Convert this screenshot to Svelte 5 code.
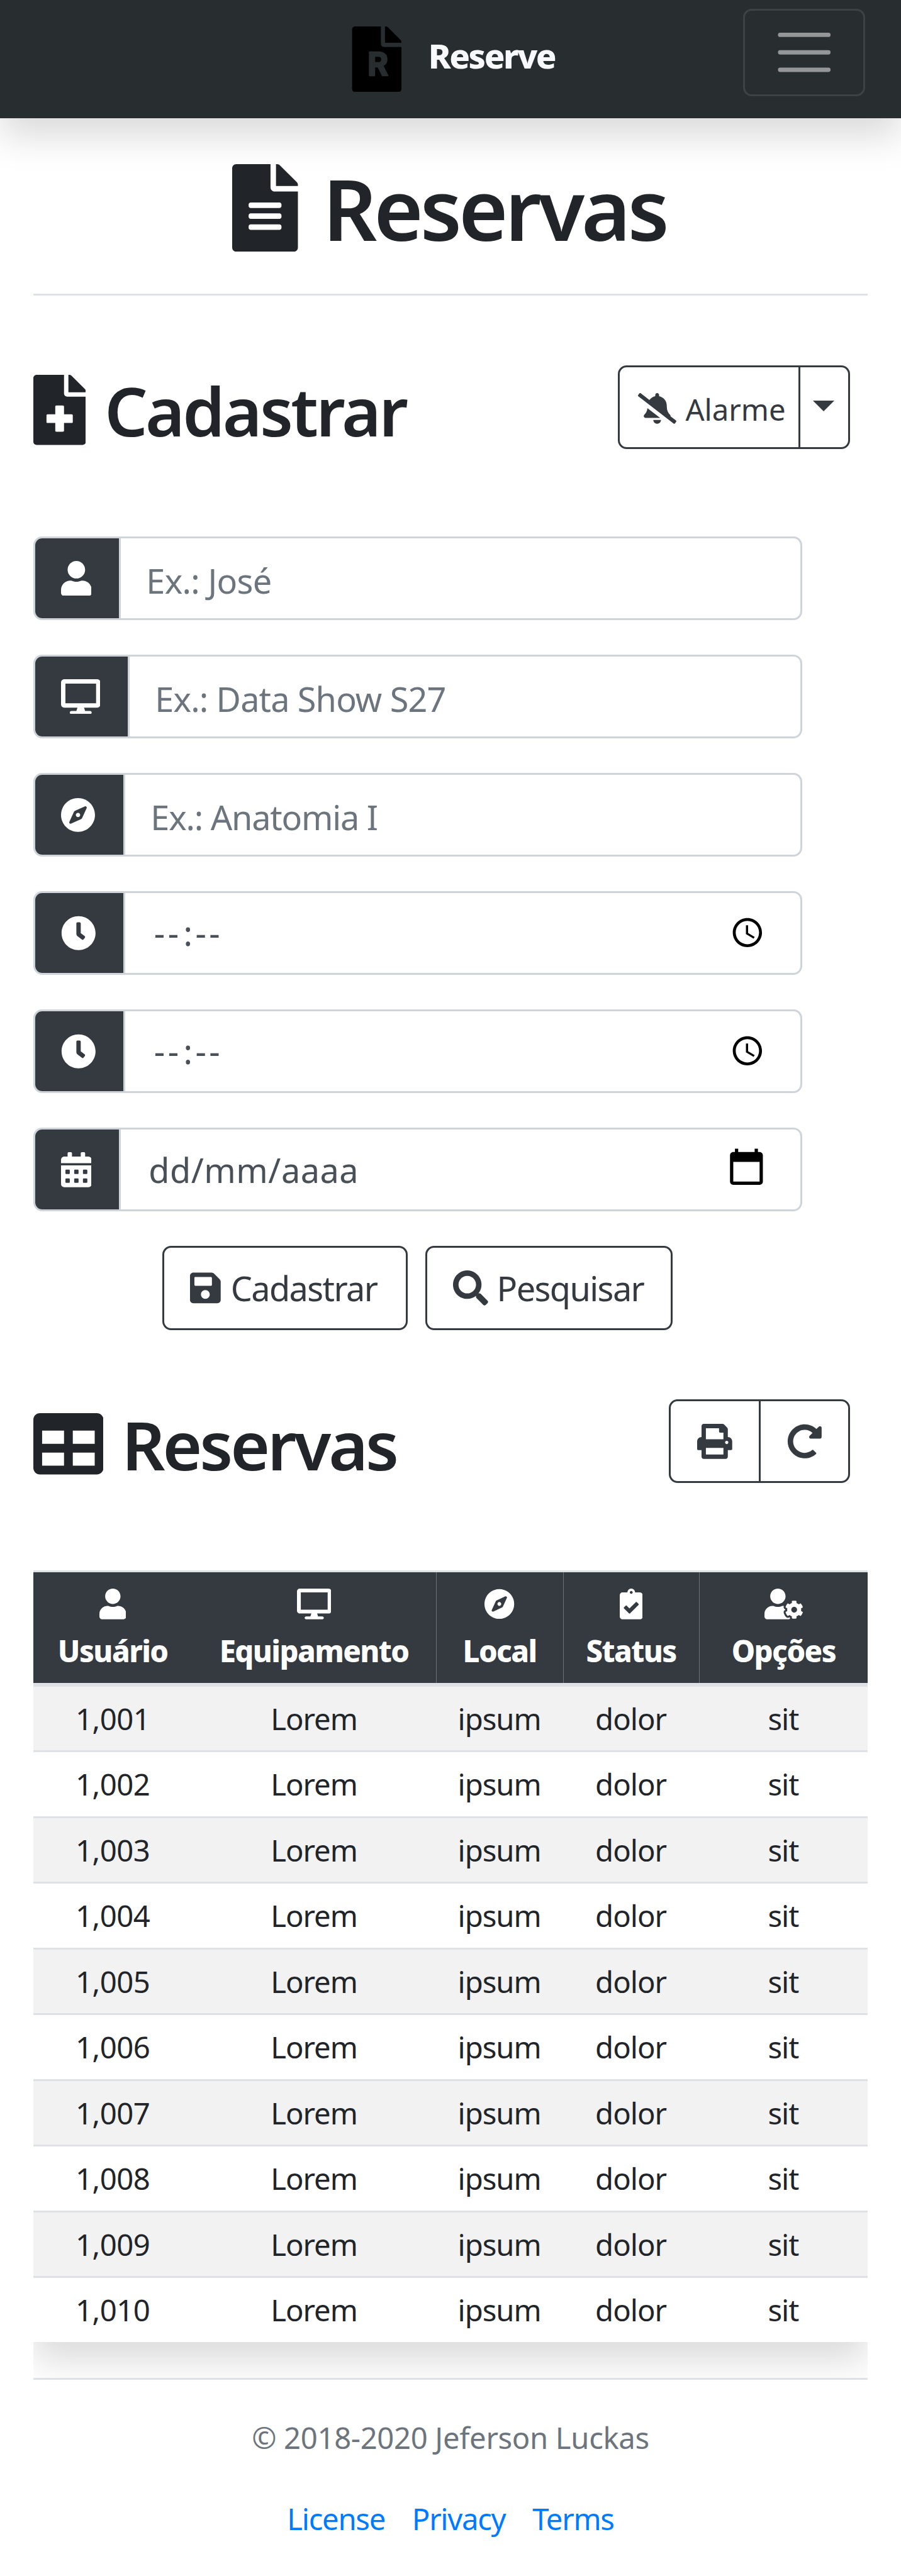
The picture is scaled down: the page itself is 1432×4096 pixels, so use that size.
<script>
  const icons = {
    fileAlt: [384, 'M224 136V0H24C10.7 0 0 10.7 0 24v464c0 13.3 10.7 24 24 24h336c13.3 0 24-10.7 24-24V160H248c-13.2 0-24-10.8-24-24zm64 236c0 6.6-5.4 12-12 12H108c-6.6 0-12-5.4-12-12v-8c0-6.6 5.4-12 12-12h168c6.6 0 12 5.4 12 12v8zm0-64c0 6.6-5.4 12-12 12H108c-6.6 0-12-5.4-12-12v-8c0-6.6 5.4-12 12-12h168c6.6 0 12 5.4 12 12v8zm0-72v8c0 6.6-5.4 12-12 12H108c-6.6 0-12-5.4-12-12v-8c0-6.6 5.4-12 12-12h168c6.6 0 12 5.4 12 12zm96-114.1v6.1H256V0h6.1c6.4 0 12.5 2.5 17 7l97.9 98c4.5 4.5 7 10.6 7 16.9z'],
    filePlus: [384, 'M377 105L279.1 7c-4.5-4.5-10.6-7-17-7H256v128h128v-6.1c0-6.3-2.5-12.4-7-16.9zM224 136V0H24C10.7 0 0 10.7 0 24v464c0 13.3 10.7 24 24 24h336c13.3 0 24-10.7 24-24V160H248c-13.2 0-24-10.8-24-24zm64 160v48c0 4.4-3.6 8-8 8h-56v56c0 4.4-3.6 8-8 8h-48c-4.4 0-8-3.6-8-8v-56h-56c-4.4 0-8-3.6-8-8v-48c0-4.4 3.6-8 8-8h56v-56c0-4.4 3.6-8 8-8h48c4.4 0 8 3.6 8 8v56h56c4.4 0 8 3.6 8 8z'],
    file: [384, 'M377 105L279.1 7c-4.5-4.5-10.6-7-17-7H256v128h128v-6.1c0-6.3-2.5-12.4-7-16.9zM224 136V0H24C10.7 0 0 10.7 0 24v464c0 13.3 10.7 24 24 24h336c13.3 0 24-10.7 24-24V160H248c-13.2 0-24-10.8-24-24z'],
    user: [448, 'M224 256c70.7 0 128-57.3 128-128S294.7 0 224 0 96 57.3 96 128s57.3 128 128 128zm89.6 32h-16.7c-22.2 10.2-46.9 16-72.9 16s-50.6-5.8-72.9-16h-16.7C60.2 288 0 348.2 0 422.4V464c0 26.5 21.5 48 48 48h352c26.5 0 48-21.5 48-48v-41.6c0-74.2-60.2-134.4-134.4-134.4z'],
    desktop: [576, 'M528 0H48C21.5 0 0 21.5 0 48v320c0 26.5 21.5 48 48 48h192l-16 48h-72c-13.3 0-24 10.7-24 24s10.7 24 24 24h272c13.3 0 24-10.7 24-24s-10.7-24-24-24h-72l-16-48h192c26.5 0 48-21.5 48-48V48c0-26.5-21.5-48-48-48zm-16 352H64V64h448v288z'],
    compass: [496, 'M225.38 233.37c-12.5 12.5-12.5 32.76 0 45.25 12.49 12.5 32.76 12.5 45.25 0 12.5-12.5 12.5-32.76 0-45.25-12.5-12.49-32.76-12.49-45.25 0zM248 8C111.03 8 0 119.03 0 256s111.03 248 248 248 248-111.03 248-248S384.97 8 248 8zm126.14 148.05L308.17 300.4a31.938 31.938 0 0 1-15.77 15.77l-144.34 65.97c-16.65 7.61-33.81-9.55-26.2-26.2l65.98-144.35a31.938 31.938 0 0 1 15.77-15.77l144.34-65.97c16.65-7.6 33.8 9.55 26.19 26.2z'],
    clock: [512, 'M256,8C119,8,8,119,8,256S119,504,256,504,504,393,504,256,393,8,256,8Zm92.49,313h0l-20,25a16,16,0,0,1-22.49,2.5h0l-67-49.72a40,40,0,0,1-15-31.23V112a16,16,0,0,1,16-16h32a16,16,0,0,1,16,16V256l58,42.5A16,16,0,0,1,348.49,321Z'],
    calendar: [448, 'M0 464c0 26.5 21.5 48 48 48h352c26.5 0 48-21.5 48-48V192H0v272zm320-196c0-6.6 5.4-12 12-12h40c6.6 0 12 5.4 12 12v40c0 6.6-5.4 12-12 12h-40c-6.6 0-12-5.4-12-12v-40zm0 128c0-6.6 5.4-12 12-12h40c6.6 0 12 5.4 12 12v40c0 6.6-5.4 12-12 12h-40c-6.6 0-12-5.4-12-12v-40zM192 268c0-6.6 5.4-12 12-12h40c6.6 0 12 5.4 12 12v40c0 6.6-5.4 12-12 12h-40c-6.6 0-12-5.4-12-12v-40zm0 128c0-6.6 5.4-12 12-12h40c6.6 0 12 5.4 12 12v40c0 6.6-5.4 12-12 12h-40c-6.6 0-12-5.4-12-12v-40zM64 268c0-6.6 5.4-12 12-12h40c6.6 0 12 5.4 12 12v40c0 6.6-5.4 12-12 12H76c-6.6 0-12-5.4-12-12v-40zm0 128c0-6.6 5.4-12 12-12h40c6.6 0 12 5.4 12 12v40c0 6.6-5.4 12-12 12H76c-6.6 0-12-5.4-12-12v-40zM400 64h-48V16c0-8.8-7.2-16-16-16h-32c-8.8 0-16 7.2-16 16v48H160V16c0-8.8-7.2-16-16-16h-32c-8.8 0-16 7.2-16 16v48H48C21.5 64 0 85.5 0 112v48h448v-48c0-26.5-21.5-48-48-48z'],
    save: [448, 'M433.941 129.941l-83.882-83.882A48 48 0 0 0 316.118 32H48C21.49 32 0 53.49 0 80v352c0 26.51 21.49 48 48 48h352c26.51 0 48-21.49 48-48V163.882a48 48 0 0 0-14.059-33.941zM224 416c-35.346 0-64-28.654-64-64 0-35.346 28.654-64 64-64s64 28.654 64 64c0 35.346-28.654 64-64 64zm96-304.52V212c0 6.627-5.373 12-12 12H76c-6.627 0-12-5.373-12-12V108c0-6.627 5.373-12 12-12h228.52c3.183 0 6.235 1.264 8.485 3.515l3.48 3.48A11.996 11.996 0 0 1 320 111.48z'],
    search: [512, 'M505 442.7L405.3 343c-4.5-4.5-10.6-7-17-7H372c27.6-35.3 44-79.7 44-128C416 93.1 322.9 0 208 0S0 93.1 0 208s93.1 208 208 208c48.3 0 92.7-16.4 128-44v16.3c0 6.4 2.5 12.5 7 17l99.7 99.7c9.4 9.4 24.6 9.4 33.9 0l28.3-28.3c9.4-9.4 9.4-24.6.1-34zM208 336c-70.7 0-128-57.2-128-128 0-70.7 57.2-128 128-128 70.7 0 128 57.2 128 128 0 70.7-57.2 128-128 128z'],
    table: [512, 'M464 32H48C21.49 32 0 53.49 0 80v352c0 26.51 21.49 48 48 48h416c26.51 0 48-21.49 48-48V80c0-26.51-21.49-48-48-48zM224 416H64v-96h160v96zm0-160H64v-96h160v96zm224 160H288v-96h160v96zm0-160H288v-96h160v96z'],
    print: [512, 'M448 192V77.25c0-8.49-3.37-16.62-9.37-22.63L393.37 9.37c-6-6-14.14-9.37-22.63-9.37H96C78.33 0 64 14.33 64 32v160c-35.35 0-64 28.65-64 64v112c0 8.84 7.16 16 16 16h48v96c0 17.67 14.33 32 32 32h320c17.67 0 32-14.33 32-32v-96h48c8.84 0 16-7.16 16-16V256c0-35.35-28.65-64-64-64zm-64 256H128v-96h256v96zm0-224H128V64h192v48c0 8.84 7.16 16 16 16h48v96zm48 72c-13.25 0-24-10.75-24-24 0-13.26 10.75-24 24-24s24 10.74 24 24c0 13.25-10.75 24-24 24z'],
    redo: [512, 'M256.455 8c66.269.119 126.437 26.233 170.859 68.685l35.715-35.715C478.149 25.851 504 36.559 504 57.941V192c0 13.255-10.745 24-24 24H345.941c-21.382 0-32.09-25.851-16.971-40.971l41.75-41.75c-30.864-28.899-70.801-44.907-113.23-45.273-92.398-.798-170.283 73.977-169.484 169.442C88.764 348.009 162.184 424 256 424c41.127 0 79.997-14.678 110.629-41.556 4.743-4.161 11.906-3.908 16.368.553l39.662 39.662c4.872 4.872 4.631 12.815-.482 17.433C378.202 479.813 319.926 504 256 504 119.034 504 8.001 392.967 8 256.002 7.995 119.193 119.646 7.755 256.455 8z'],
    bellSlash: [640, 'M633.82 458.1l-90.62-70.05c.19-1.38.8-2.66.8-4.06.05-7.55-2.61-15.27-8.61-21.71-19.32-20.76-55.47-51.99-55.47-154.29 0-77.7-54.48-139.9-127.94-155.16V32c0-17.67-14.32-32-31.98-32s-31.98 14.33-31.98 32v20.84c-40.33 8.38-74.66 31.07-97.59 62.57L45.47 3.37C38.49-2.05 28.43-.8 23.01 6.18L3.37 31.45C-2.05 38.42-.8 48.47 6.18 53.9l588.35 454.73c6.98 5.43 17.03 4.17 22.46-2.81l19.64-25.27c5.42-6.97 4.17-17.02-2.81-22.45zM157.23 251.54c-8.61 67.96-36.41 93.33-52.62 110.75-6 6.45-8.66 14.16-8.61 21.71.11 16.4 12.98 32 32.1 32h241.92L157.23 251.54zM320 512c35.32 0 63.97-28.65 63.97-64H256.03c0 35.35 28.65 64 63.97 64z'],
    clipboard: [384, 'M336 64h-80c0-35.3-28.7-64-64-64s-64 28.7-64 64H48C21.5 64 0 85.5 0 112v352c0 26.5 21.5 48 48 48h288c26.5 0 48-21.5 48-48V112c0-26.5-21.5-48-48-48zM192 40c13.3 0 24 10.7 24 24s-10.7 24-24 24-24-10.7-24-24 10.7-24 24-24zm121.2 231.8l-143 141.8c-4.7 4.7-12.3 4.6-17-.1l-82.6-83.3c-4.7-4.7-4.6-12.3.1-17L99.1 285c4.7-4.7 12.3-4.6 17 .1l46 46.4 106-105.2c4.7-4.7 12.3-4.6 17 .1l28.2 28.4c4.7 4.8 4.6 12.3-.1 17z'],
    userCog: [640, 'M610.5 373.3c2.6-14.1 2.6-28.5 0-42.6l25.8-14.9c3-1.7 4.3-5.2 3.3-8.5-6.7-21.6-18.2-41.2-33.2-57.4-2.3-2.5-6-3.1-9-1.4l-25.8 14.9c-10.9-9.3-23.4-16.5-36.9-21.3v-29.8c0-3.4-2.4-6.4-5.7-7.1-22.3-5-45-4.8-66.2 0-3.3.7-5.7 3.7-5.7 7.1v29.8c-13.5 4.8-26 12-36.9 21.3l-25.8-14.9c-2.9-1.7-6.7-1.1-9 1.4-15 16.2-26.5 35.8-33.2 57.4-1 3.3.4 6.8 3.3 8.5l25.8 14.9c-2.6 14.1-2.6 28.5 0 42.6l-25.8 14.9c-3 1.7-4.3 5.2-3.3 8.5 6.7 21.6 18.2 41.1 33.2 57.4 2.3 2.5 6 3.1 9 1.4l25.8-14.9c10.9 9.3 23.4 16.5 36.9 21.3v29.8c0 3.4 2.4 6.4 5.7 7.1 22.3 5 45 4.8 66.2 0 3.3-.7 5.7-3.7 5.7-7.1v-29.8c13.5-4.8 26-12 36.9-21.3l25.8 14.9c2.9 1.7 6.7 1.1 9-1.4 15-16.2 26.5-35.8 33.2-57.4 1-3.3-.4-6.8-3.3-8.5l-25.8-14.9zM496 400.5c-26.8 0-48.5-21.8-48.5-48.5s21.8-48.5 48.5-48.5 48.5 21.8 48.5 48.5-21.7 48.5-48.5 48.5zM224 256c70.7 0 128-57.3 128-128S294.7 0 224 0 96 57.3 96 128s57.3 128 128 128zm201.2 226.5c-2.3-1.2-4.6-2.6-6.8-3.9l-7.9 4.6c-6 3.4-12.8 5.3-19.6 5.3-10.9 0-21.4-4.6-28.9-12.6-18.3-19.8-32.3-43.9-40.2-69.6-5.5-17.7 1.9-36.4 17.9-45.7l7.9-4.6c-.1-2.6-.1-5.2 0-7.8l-7.9-4.6c-16-9.2-23.4-28-17.9-45.7.9-2.9 2.2-5.8 3.2-8.7-3.8-.3-7.5-1.2-11.4-1.2h-16.7c-22.2 10.2-46.9 16-72.9 16s-50.6-5.8-72.9-16h-16.7C60.2 288 0 348.2 0 422.4V464c0 26.5 21.5 48 48 48h352c10.1 0 19.5-3.2 27.2-8.5-1.2-3.8-2-7.7-2-11.8v-9.2z']
  };

  const fields = [
    { icon: 'user', text: 'Ex.: José', kind: 'jose' },
    { icon: 'desktop', text: 'Ex.: Data Show S27', kind: 'data' },
    { icon: 'compass', text: 'Ex.: Anatomia I', kind: 'local' },
    { icon: 'clock', kind: 'time' },
    { icon: 'clock', kind: 'time' },
    { icon: 'calendar', text: 'dd/mm/aaaa', kind: 'date' }
  ];

  const columns = [
    { icon: 'user', label: 'Usuário' },
    { icon: 'desktop', label: 'Equipamento' },
    { icon: 'compass', label: 'Local' },
    { icon: 'clipboard', label: 'Status' },
    { icon: 'userCog', label: 'Opções' }
  ];

  const rows = Array.from({ length: 10 }, (_, i) => [`1,0${String(i + 1).padStart(2, '0')}`, 'Lorem', 'ipsum', 'dolor', 'sit']);
</script>

{#snippet icon(name)}
  <svg class="icon" viewBox="0 0 {icons[name][0]} 512" aria-hidden="true"><path fill="currentColor" d={icons[name][1]} /></svg>
{/snippet}

<div class="page">
  <header>
    <div class="brand">
      <svg class="logo" viewBox="0 0 384 512" aria-hidden="true">
        <path d={icons.file[1]} />
        <text x="121" y="381">R</text>
      </svg>
      <span>Reserve</span>
    </div>
    <button class="toggler" aria-label="Menu">
      <svg viewBox="0 0 30 30"><path d="M4 7h22M4 15h22M4 23h22" /></svg>
    </button>
  </header>

  <main>
    <h1>{@render icon('fileAlt')}<span>Reservas</span></h1>

    <div class="section-head first">
      <h2>{@render icon('filePlus')}<span>Cadastrar</span></h2>
      <div class="group alarm">
        <button>{@render icon('bellSlash')}<span>Alarme</span></button>
        <button class="caret" aria-label="Opções"><i></i></button>
      </div>
    </div>

    <form>
      {#each fields as f}
        <div class="field {f.kind}">
          <span class="addon {f.icon}">{@render icon(f.icon)}</span>
          {#if f.kind === 'time'}
            <span class="value"><b>--</b><b class="colon">:</b><b>--</b></span>
            <svg class="picker" viewBox="0 0 24 24"><path d="M12 2C6.47 2 2 6.48 2 12s4.47 10 10 10 10-4.48 10-10S17.52 2 12 2zm0 18c-4.42 0-8-3.58-8-8s3.58-8 8-8 8 3.58 8 8-3.58 8-8 8zM12.5 7H11v6l5.25 3.15.75-1.23-4.5-2.67z" /></svg>
          {:else}
            <span class="value">{f.text}</span>
            {#if f.kind === 'date'}
              <svg class="picker" viewBox="0 0 24 24"><path d="M20 3h-1V1h-2v2H7V1H5v2H4c-1.1 0-2 .9-2 2v16c0 1.1.9 2 2 2h16c1.1 0 2-.9 2-2V5c0-1.1-.9-2-2-2zm0 18H4V9h16v12z" /></svg>
            {/if}
          {/if}
        </div>
      {/each}
      <div class="actions">
        <button type="button" class="save">{@render icon('save')}<span>Cadastrar</span></button>
        <button type="button" class="find">{@render icon('search')}<span>Pesquisar</span></button>
      </div>
    </form>

    <div class="section-head second">
      <h2>{@render icon('table')}<span>Reservas</span></h2>
      <div class="group tools">
        <button aria-label="Imprimir">{@render icon('print')}</button>
        <button aria-label="Atualizar">{@render icon('redo')}</button>
      </div>
    </div>

    <div class="table-wrap">
      <table>
        <thead>
          <tr>
            {#each columns as c}
              <th>{@render icon(c.icon)}<span>{c.label}</span></th>
            {/each}
          </tr>
        </thead>
        <tbody>
          {#each rows as r}
            <tr>{#each r as cell}<td>{cell}</td>{/each}</tr>
          {/each}
        </tbody>
      </table>
    </div>
  </main>

  <footer>
    <p>© 2018-2020 Jeferson Luckas</p>
    <nav><a href="#license">License</a><a href="#privacy">Privacy</a><a href="#terms">Terms</a></nav>
  </footer>
</div>

<style>
  :global(body) { margin: 0; background: #fff; overflow: hidden; }
  .page, .page * { box-sizing: border-box; }
  .page {
    zoom: 0.99514;
    width: 1439px;
    height: 4116px;
    overflow: hidden;
    background: #fff;
    color: #212529;
    font-family: 'Noto Sans', 'Open Sans', sans-serif;
    font-size: 54.3px;
    white-space: nowrap;
  }
  button { margin: 0; padding: 0; background: none; font: inherit; color: #343a40; }
  .icon { display: block; flex: none; height: 1em; }

  header {
    display: flex;
    align-items: flex-start;
    height: 189px;
    padding: 14px 57px 0 562px;
    background: #282d30;
    box-shadow: 0 28px 56px rgba(0, 0, 0, 0.15);
  }
  .brand { display: flex; padding-top: 28px; color: #f8f9fa; font-weight: 800; letter-spacing: -2.4px; }
  .brand span { line-height: 93px; margin-left: 42px; }
  .logo { width: 80px; height: 105px; }
  .logo text { font: 700 252px Roboto, sans-serif; fill: #282d30; stroke: #282d30; stroke-width: 12px; stroke-linejoin: round; letter-spacing: 0; }
  .toggler {
    width: 195px;
    height: 140px;
    margin-left: auto;
    padding: 14px 42px;
    border: 3.5px solid rgba(255, 255, 255, 0.1);
    border-radius: 14px;
  }
  .toggler svg { display: block; width: 105px; height: 105px; }
  .toggler path { stroke: rgba(255, 255, 255, 0.5); stroke-width: 2; stroke-linecap: round; stroke-miterlimit: 10; }

  main { margin: 0 53px; }
  h1 {
    display: flex;
    height: 283.5px;
    margin: 0;
    padding: 73px 0 0 318px;
    border-bottom: 3.5px solid #dee2e6;
    font-size: 135px;
    font-weight: 600;
    letter-spacing: -5.1px;
    line-height: 141px;
  }
  h1 .icon { height: 140px; }
  h1 span { margin-left: 39.5px; }

  .section-head { display: flex; justify-content: space-between; height: 134px; }
  .first { margin-top: 111.5px; }
  .second { margin-top: 111px; }
  h2 { display: flex; margin: 0; font-size: 108px; font-weight: 600; letter-spacing: -3.7px; line-height: 143px; }
  h2 .icon { height: 112px; margin-top: 15px; }
  .first h2 span { margin-left: 30px; }
  .second h2 span { margin-left: 29.5px; letter-spacing: -4.1px; }
  .group { display: flex; height: 134px; margin-right: 28px; border: 3.5px solid #343a40; border-radius: 14px; }
  .group button { display: flex; align-items: center; justify-content: center; border: 0; }
  .group button + button { border-left: 3.5px solid #343a40; }
  .alarm { width: 371px; font-size: 47.5px; letter-spacing: -1.3px; }
  .alarm .icon { height: 49px; margin: 4px 14.5px 0 0; }
  .alarm button:first-child { width: 285px; justify-content: flex-start; padding-left: 29px; }
  .alarm button:first-child span { margin: 6px 0 0; line-height: 128px; }
  .alarm .caret { flex: 1; }
  .caret i { margin: -4px 3px 0 0; border: solid transparent; border-width: 17.5px 17.5px 0; border-top-color: #343a40; }
  .tools { width: 290px; }
  .tools button { flex: 1; }
  .tools .icon { height: 56px; }

  form { display: flex; flex-direction: column; margin-top: 139px; }
  .field { display: flex; width: 1228px; height: 134px; margin-bottom: 55px; border: 3.5px solid #ced4da; border-radius: 14px; color: #6c757d; overflow: hidden; }
  .addon { flex: none; width: 136.5px; padding: 36px 0 0 41px; border-right: 3.5px solid #ced4da; background: #343a40; color: #fff; }
  .addon.desktop { width: 150.5px; }
  .addon.compass, .addon.clock { width: 143.5px; }
  .addon .icon { height: 56px; }
  .value { margin-left: 41px; line-height: 136px; }
  .jose .value { letter-spacing: -0.7px; }
  .data .value { letter-spacing: -0.87px; }
  .local .value { letter-spacing: -1.24px; }
  .date .value { margin-left: 45px; line-height: 129px; letter-spacing: 0.5px; color: #495057; }
  .time .value { display: flex; margin-left: 46.5px; line-height: 128px; letter-spacing: 4.5px; color: #495057; }
  .value b { font-weight: 400; }
  .value .colon { margin: 0 4.5px 0 3px; letter-spacing: 0; }
  .picker { flex: none; width: 56px; height: 56px; margin: 35px 56px 0 auto; fill: #000; }
  .date .picker { width: 63px; height: 63px; margin: 28.5px 54px 0 auto; }

  .actions { display: flex; gap: 28px; margin-left: 206px; }
  .actions button { display: flex; width: 392px; height: 134px; padding-left: 41.5px; border: 3.5px solid #343a40; border-radius: 14px; line-height: 129px; letter-spacing: -1.6px; }
  .actions .find { width: 395px; }
  .actions .icon { height: 56px; margin: 36px 14px 0 0; }
  .actions .save .icon { margin-right: 16px; }

  .table-wrap { height: 1291px; margin-top: 139px; overflow: hidden; }
  table { display: block; width: 1333px; font-size: 47.5px; text-align: center; box-shadow: 0 28px 56px rgba(0, 0, 0, 0.15); }
  thead, tbody { display: block; }
  tr { display: grid; grid-template-columns: 254px 389px 203px 217px 270px; }
  thead tr { height: 183px; border: solid #dee2e6; border-width: 3.5px 0; background: #343a40; color: #fff; }
  th { padding: 27px 0 0; font-weight: 800; letter-spacing: -1.6px; }
  th:nth-child(n + 3) { border-left: 1px solid #6c7073; }
  th .icon { height: 49px; margin: 0 auto 13px; }
  th span { display: block; line-height: 75px; }
  tbody tr { height: 105px; border-top: 3.5px solid #dee2e6; background: #fff; }
  tbody tr:nth-child(odd) { background: #f2f2f2; }
  td { padding: 0; line-height: 102.5px; letter-spacing: -1px; }
  td:first-child { letter-spacing: -0.5px; }

  footer { margin: 0 53px; padding-top: 55px; border-top: 3.5px solid #dee2e6; font-size: 47.5px; line-height: 74px; text-align: center; }
  footer p { margin: 0 0 56px; color: #6c757d; letter-spacing: -0.35px; }
  nav { display: flex; justify-content: center; gap: 43px; }
  a { color: #007bff; text-decoration: none; letter-spacing: -1.3px; }
</style>
